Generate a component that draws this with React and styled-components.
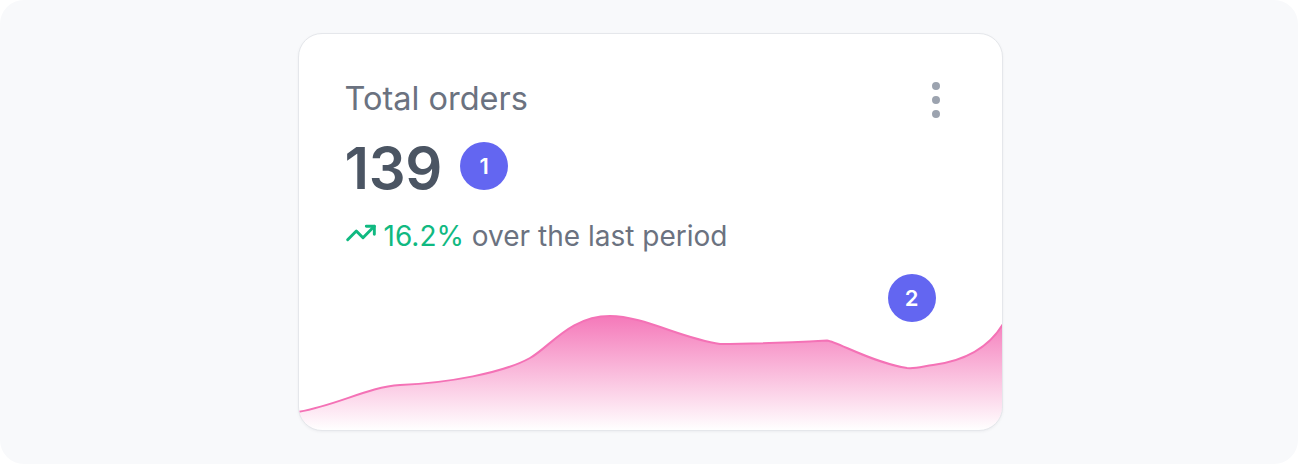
import React from "react";
import styled, { createGlobalStyle } from "styled-components";
import { EllipsisVertical, TrendingUp } from "lucide-react";

const GlobalStyle = createGlobalStyle`
  html, body { margin: 0; padding: 0; background: #ffffff; }
  body { font-family: Inter, "Noto Sans", sans-serif; -webkit-font-smoothing: antialiased; }
`;

const Page = styled.div`
  width: 1298px;
  height: 464px;
  box-sizing: border-box;
  background: #f8f9fb;
  border-radius: 24px;
  display: flex;
  align-items: center;
  justify-content: center;
`;

const Card = styled.div`
  position: relative;
  width: 705px;
  height: 398px;
  box-sizing: border-box;
  margin-left: 2px;
  margin-bottom: 1px;
  background: #ffffff;
  border: 1px solid #e5e7eb;
  border-radius: 24px;
  box-shadow: 0 1px 3px rgba(15, 23, 42, 0.05);
  overflow: hidden;
  display: flex;
  flex-direction: column;
`;

const Body = styled.div`
  padding: 42px 42px 0 46px;
  display: flex;
  flex-direction: column;
`;

const Header = styled.div`
  display: flex;
  align-items: flex-start;
  justify-content: space-between;
  height: 48px;
`;

const Title = styled.h3`
  margin: 0;
  font-size: 32.5px;
  line-height: 46px;
  font-weight: 400;
  color: #6b7280;
`;

const MenuButton = styled.button`
  border: 0;
  padding: 0;
  background: none;
  width: 48px;
  height: 48px;
  color: #9ca3af;
  display: flex;
  cursor: pointer;
`;

const ValueRow = styled.div`
  margin-top: 15px;
  display: flex;
  align-items: center;
  gap: 18px;
`;

const Value = styled.span`
  font-size: 58px;
  line-height: 58px;
  font-weight: 600;
  color: #4b5563;
  letter-spacing: -0.3px;
`;

const Marker = styled.span`
  width: 48px;
  height: 48px;
  border-radius: 50%;
  background: #6366f1;
  color: #ffffff;
  font-size: 22px;
  font-weight: 600;
  display: inline-flex;
  align-items: center;
  justify-content: center;
  margin-bottom: ${(p) => (p.$lift ? p.$lift : 0)}px;
`;

const FloatingMarker = styled(Marker)`
  position: absolute;
  top: 240px;
  right: 66px;
`;

const TrendRow = styled.div`
  margin-top: 19px;
  display: flex;
  align-items: center;
  gap: 7px;
  font-size: 28px;
  line-height: 40px;
  color: #6b7280;
  svg { margin-bottom: 6px; flex-shrink: 0; }
`;

const Up = styled.span`
  color: #10b981;
`;

const Chart = styled.svg`
  display: block;
  margin-top: auto;
  width: 100%;
  height: 119px;
`;

const line = [
  "M0,101",
  "C40,94 70,76 102,74",
  "C150,72 205,62 232,47",
  "C252,36 272,5 312,5",
  "C345,5 385,28 422,33",
  "C460,33 500,31 529,29.5",
  "C540,31 575,52 609,57",
  "C618,58 626,55 635,54",
  "C665,50 690,38 705,13",
].join(" ");
const area = `${line} L705,119 L0,119 Z`;

export default function App() {
  return (
    <>
      <GlobalStyle />
      <Page>
        <Card>
          <Body>
            <Header>
              <Title>Total orders</Title>
              <MenuButton aria-label="More">
                <EllipsisVertical size={48} strokeWidth={2} />
              </MenuButton>
            </Header>
            <ValueRow>
              <Value>139</Value>
              <Marker $lift={4}>1</Marker>
            </ValueRow>
            <TrendRow>
              <TrendingUp size={32} color="#10b981" strokeWidth={2.2} />
              <span>
                <Up>16.2%</Up> over the last period
              </span>
            </TrendRow>
          </Body>
          <FloatingMarker>2</FloatingMarker>
          <Chart viewBox="1 0 703 119" preserveAspectRatio="none">
            <defs>
              <linearGradient id="pinkFill" x1="0" y1="0" x2="0" y2="1">
                <stop offset="0%" stopColor="#f472b6" stopOpacity="0.95" />
                <stop offset="100%" stopColor="#f472b6" stopOpacity="0" />
              </linearGradient>
            </defs>
            <path d={area} fill="url(#pinkFill)" />
            <path d={line} fill="none" stroke="#f472b6" strokeWidth="2" />
          </Chart>
        </Card>
      </Page>
    </>
  );
}
